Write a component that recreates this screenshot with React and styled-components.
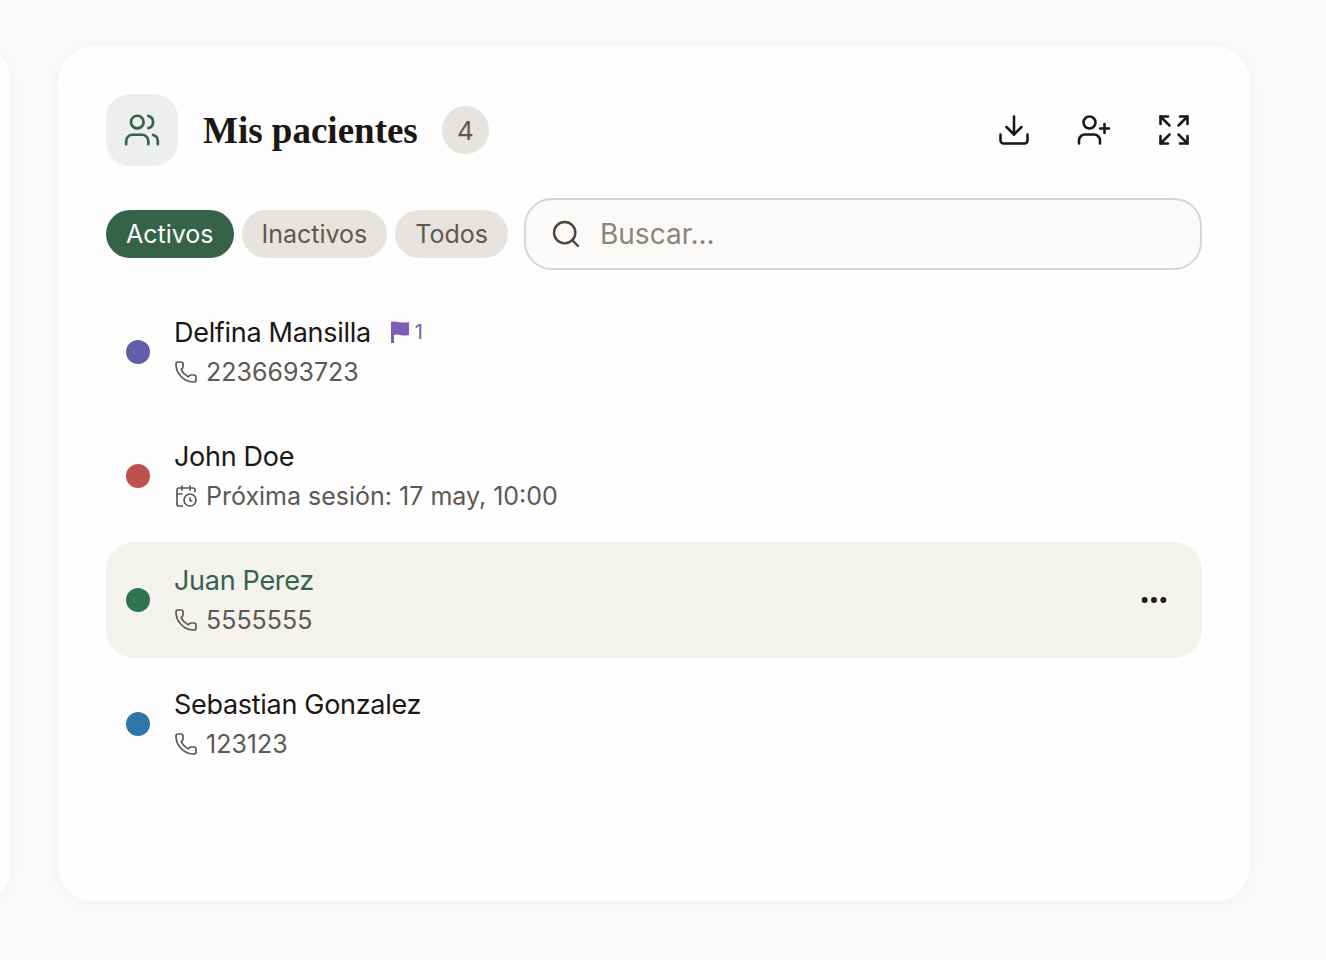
import React from 'react';
import styled, { createGlobalStyle } from 'styled-components';
import {
  CalendarClock,
  Download,
  Ellipsis,
  Expand,
  Phone,
  Search,
  UserPlus,
  Users,
} from 'lucide-react';

const GlobalStyle = createGlobalStyle`
  html, body {
    margin: 0;
    padding: 0;
    height: 100%;
    background-color: #fbfaf8;
    overflow: hidden;
  }
`;

const Page = styled.div`
  width: 1326px;
  height: 960px;
  padding: 46px 0 58px;
  box-sizing: border-box;
  display: flex;
  gap: 48px;
  overflow: hidden;
  font-family: Inter, 'Liberation Sans', sans-serif;
`;

const SidePanel = styled.aside`
  flex: 0 0 400px;
  margin-left: -390px;
  background-color: #fefefe;
  border-radius: 32px;
  box-shadow: 0 2px 16px rgba(60, 50, 40, 0.05);
`;

const Card = styled.main`
  flex: 0 0 1192px;
  box-sizing: border-box;
  padding: 48px;
  background-color: #fefefe;
  border-radius: 36px;
  box-shadow: 0 2px 16px rgba(60, 50, 40, 0.05);
  display: flex;
  flex-direction: column;
`;

const Header = styled.header`
  display: flex;
  align-items: center;
  height: 72px;
`;

const TitleIcon = styled.div`
  width: 72px;
  height: 72px;
  border-radius: 24px;
  background-color: #ecefee;
  color: #35634a;
  display: flex;
  align-items: center;
  justify-content: center;
`;

const Title = styled.h1`
  margin: 0 24px 0 25px;
  font-family: 'Liberation Serif', serif;
  font-size: 37px;
  font-weight: 700;
  color: #1c1712;
`;

const CountBadge = styled.span`
  width: 47px;
  height: 48px;
  border-radius: 50%;
  background-color: #e7e4df;
  color: #5e5851;
  font-size: 26px;
  display: flex;
  align-items: center;
  justify-content: center;
`;

const HeaderActions = styled.div`
  margin-left: auto;
  margin-right: 10px;
  display: flex;
  align-items: center;
  gap: 44px;
  color: #1c1712;
`;

const Filters = styled.div`
  display: flex;
  align-items: center;
  gap: 8px;
  margin-top: 32px;
`;

const FilterChip = styled.button`
  height: 48px;
  padding: 0 20px;
  border: 0;
  border-radius: 24px;
  font-family: inherit;
  font-size: 25px;
  background-color: ${(p) => (p.$active ? '#35634a' : '#e7e4df')};
  color: ${(p) => (p.$active ? '#fbfaf8' : '#5e5851')};
`;

const SearchBox = styled.label`
  flex: 1;
  height: 72px;
  box-sizing: border-box;
  margin-left: 8px;
  padding: 0 24px;
  border: 2px solid #d9d6cf;
  border-radius: 28px;
  background-color: #fbfaf8;
  color: #4b453f;
  display: flex;
  align-items: center;
  gap: 18px;
`;

const SearchInput = styled.input`
  flex: 1;
  border: 0;
  outline: 0;
  padding: 0;
  background: transparent;
  font-family: inherit;
  font-size: 28px;
  color: #1c1712;

  &::placeholder {
    color: #8a857e;
  }
`;

const PatientList = styled.ul`
  list-style: none;
  margin: 24px 0 0;
  padding: 0;
  display: flex;
  flex-direction: column;
  gap: 8px;
`;

const PatientRow = styled.li`
  height: 116px;
  box-sizing: border-box;
  padding: 0 32px 0 20px;
  border-radius: 28px;
  background-color: ${(p) => (p.$selected ? '#f3f2ee' : 'transparent')};
  display: flex;
  align-items: center;
  gap: 24px;
`;

const Dot = styled.span`
  flex: none;
  width: 24px;
  height: 24px;
  border-radius: 50%;
  background-color: ${(p) => p.$color};
`;

const PatientInfo = styled.div`
  flex: 1;
  display: flex;
  flex-direction: column;
  gap: 4px;
`;

const NameLine = styled.div`
  display: flex;
  align-items: center;
  gap: 18px;
  height: 36px;
`;

const Name = styled.span`
  font-size: 27px;
  letter-spacing: -0.3px;
  color: ${(p) => (p.$selected ? '#35634a' : '#1c1712')};
`;

const FlagCount = styled.span`
  display: flex;
  align-items: center;
  gap: 4px;
  font-size: 20px;
  color: #7a5cb0;
`;

const Detail = styled.div`
  display: flex;
  align-items: center;
  gap: 8px;
  height: 36px;
  font-size: 25px;
  color: #5e5851;
`;

const RowMenu = styled.span`
  display: flex;
  color: #1c1712;
`;

const FlagIcon = () => (
  <svg width="22" height="24" viewBox="0 0 22 24" fill="#7d5db8" aria-hidden="true">
    <path d="M2 2c5-2 8 2 18 0v13c-7 2-11-2-15 0v8H2z" />
  </svg>
);

const patients = [
  { name: 'Delfina Mansilla', color: '#655ca8', detail: '2236693723', flags: 1 },
  { name: 'John Doe', color: '#bc524c', detail: 'Próxima sesión: 17 may, 10:00', session: true },
  { name: 'Juan Perez', color: '#2f7350', detail: '5555555', selected: true },
  { name: 'Sebastian Gonzalez', color: '#2f76a8', detail: '123123' },
];

const App = () => {
  return (
    <Page>
      <GlobalStyle />
      <SidePanel />
      <Card>
        <Header>
          <TitleIcon>
            <Users size={38} strokeWidth={1.7} />
          </TitleIcon>
          <Title>Mis pacientes</Title>
          <CountBadge>4</CountBadge>
          <HeaderActions>
            <Download size={36} strokeWidth={1.7} />
            <UserPlus size={36} strokeWidth={1.7} />
            <Expand size={36} strokeWidth={1.7} />
          </HeaderActions>
        </Header>
        <Filters>
          <FilterChip $active>Activos</FilterChip>
          <FilterChip>Inactivos</FilterChip>
          <FilterChip>Todos</FilterChip>
          <SearchBox>
            <Search size={32} strokeWidth={1.8} />
            <SearchInput placeholder="Buscar..." />
          </SearchBox>
        </Filters>
        <PatientList>
          {patients.map((p) => (
            <PatientRow key={p.name} $selected={p.selected}>
              <Dot $color={p.color} />
              <PatientInfo>
                <NameLine>
                  <Name $selected={p.selected}>{p.name}</Name>
                  {p.flags && (
                    <FlagCount>
                      <FlagIcon />
                      {p.flags}
                    </FlagCount>
                  )}
                </NameLine>
                <Detail>
                  {p.session ? (
                    <CalendarClock size={24} strokeWidth={1.7} />
                  ) : (
                    <Phone size={24} strokeWidth={1.7} />
                  )}
                  {p.detail}
                </Detail>
              </PatientInfo>
              {p.selected && (
                <RowMenu>
                  <Ellipsis size={32} strokeWidth={2.4} />
                </RowMenu>
              )}
            </PatientRow>
          ))}
        </PatientList>
      </Card>
    </Page>
  );
};

export default App;
